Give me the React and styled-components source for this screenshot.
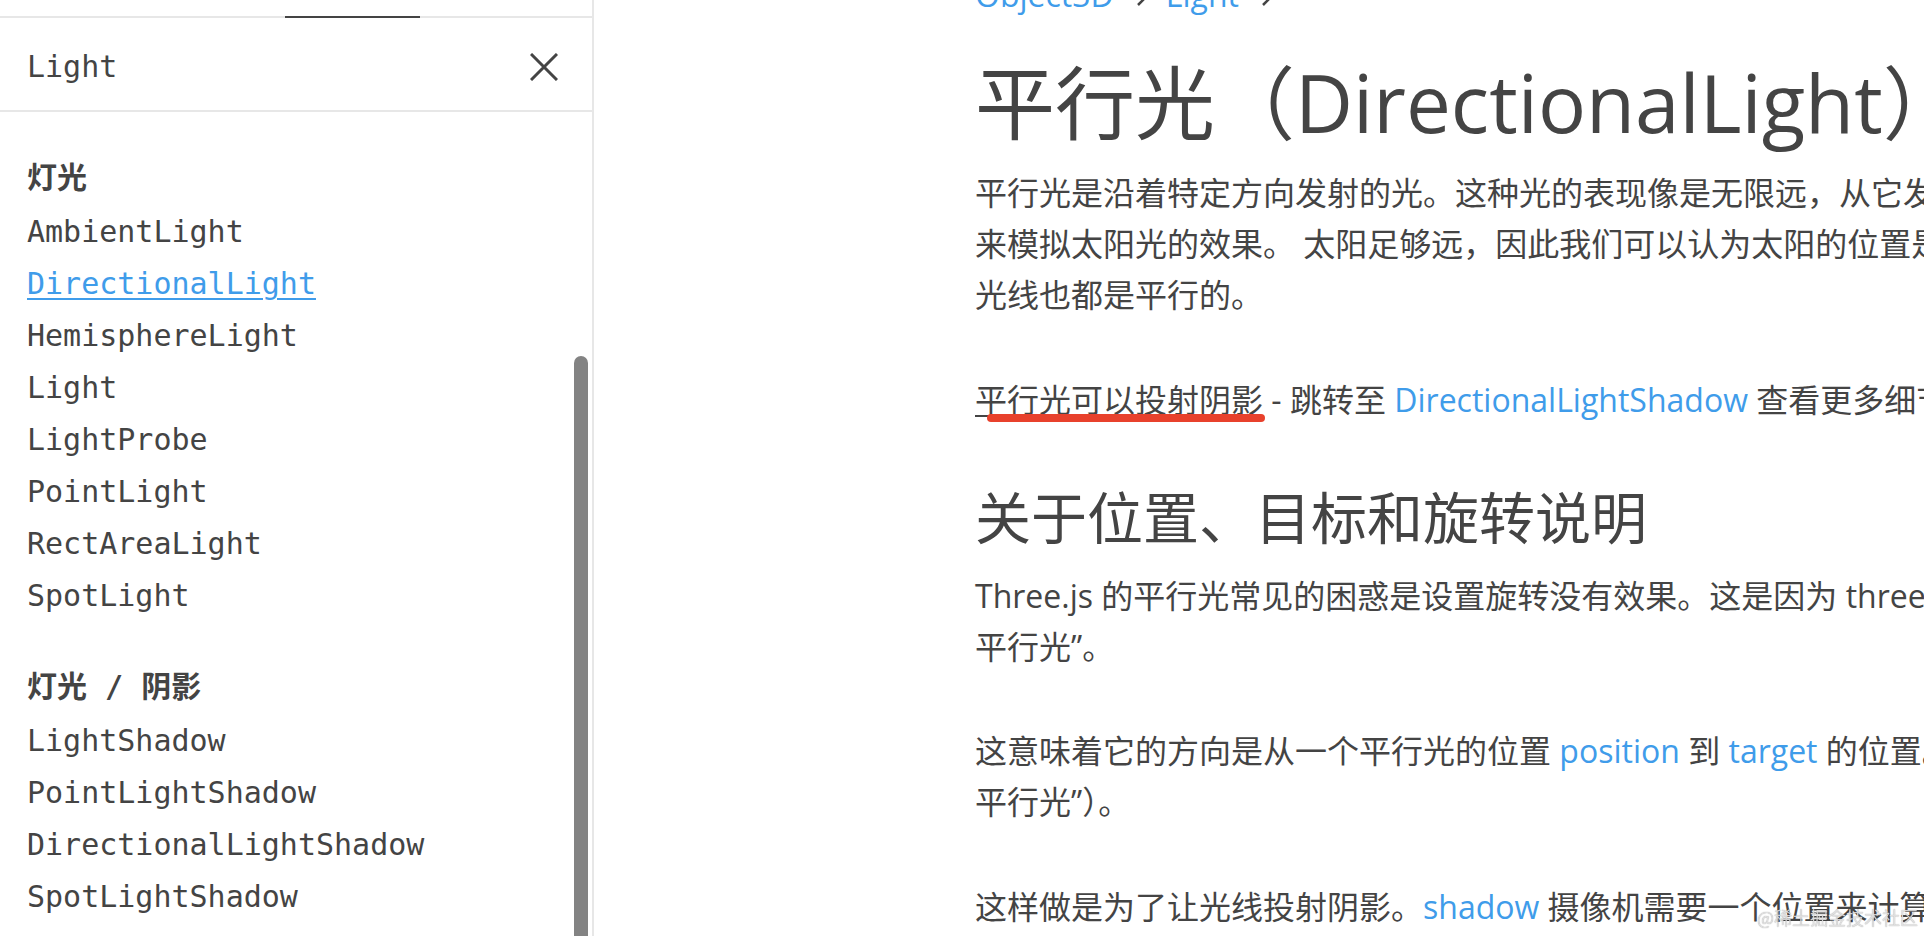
import styled, { createGlobalStyle } from 'styled-components';

const GlobalStyle = createGlobalStyle`
	html, body {
		margin: 0;
		padding: 0;
		height: 100%;
		overflow: hidden;
		background: #fff;
	}
	body {
		font-family: "Open Sans", "Noto Sans CJK SC", sans-serif;
		color: #444;
	}
`;

const Page = styled.div`
	display: flex;
	width: 100vw;
	height: 100vh;
	overflow: hidden;
`;

const Sidebar = styled.aside`
	position: relative;
	flex: 0 0 592px;
	display: flex;
	flex-direction: column;
	border-right: 2px solid #e7e7e7;
	overflow: hidden;
	font-family: "DejaVu Sans Mono", "Noto Sans CJK SC", monospace;
	color: #444;
`;

const TabLine = styled.div`
	display: flex;
	margin-top: 16px;
	padding-left: 285px;
	height: 2px;
	background: #e7e7e7;
`;

const TabActive = styled.div`
	width: 135px;
	height: 2px;
	background: #444;
`;

const Header = styled.div`
	display: flex;
	align-items: center;
	justify-content: space-between;
	box-sizing: border-box;
	height: 94px;
	padding: 5px 34px 0 27px;
	border-bottom: 2px solid #e7e7e7;
	font-size: 30px;
`;

const CloseButton = styled.button`
	display: flex;
	padding: 0;
	border: none;
	background: none;
	cursor: pointer;
`;

const Nav = styled.nav`
	padding: 40px 0 0 27px;
`;

const Section = styled.div`
	& + & {
		margin-top: 39px;
	}
`;

const SectionTitle = styled.h2`
	margin: 0 0 2px;
	font-size: 30px;
	line-height: 52px;
	font-weight: 700;
	white-space: pre;
`;

const NavItem = styled.a`
	display: block;
	font-size: 30px;
	line-height: 52px;
	color: ${(p) => (p.$active ? '#3f9cea' : '#444')};
	text-decoration: ${(p) => (p.$active ? 'underline' : 'none')};
	text-decoration-thickness: 2px;
	text-underline-offset: 4px;
`;

const ScrollThumb = styled.div`
	position: absolute;
	right: 4px;
	top: 356px;
	bottom: 0;
	width: 14px;
	border-radius: 7px 7px 0 0;
	background: #838383;
`;

const Main = styled.main`
	flex: 1;
	min-width: 0;
	padding-left: 381px;
	overflow: hidden;
	white-space: nowrap;
`;

const Breadcrumb = styled.div`
	display: flex;
	align-items: center;
	margin-top: -31px;
	height: 51px;
	font-size: 32px;
`;

const Chevron = styled.svg`
	margin: 0 17px 0 23px;
`;

const Link = styled.a`
	color: #3f9cea;
	text-decoration: none;
`;

const Title = styled.h1`
	margin: 34px 0 0;
	font-size: 80px;
	line-height: 96px;
	font-weight: 400;
`;

const SubTitle = styled.h2`
	margin: 59px 0 0;
	font-size: 56px;
	line-height: 67px;
	font-weight: 400;
`;

const Para = styled.p`
	margin: ${(p) => (p.$first ? '17px' : p.$afterHeading ? '19px' : '53px')} 0 0;
	font-size: 32px;
	line-height: 51.2px;
`;

const Marked = styled.span`
	position: relative;
	text-decoration: underline;
	text-decoration-thickness: 2px;
	text-underline-offset: 3px;

	&::after {
		content: '';
		position: absolute;
		left: 12px;
		right: -2px;
		top: 36px;
		height: 8px;
		border-radius: 4px;
		background: #e8412c;
	}
`;

const Watermark = styled.div`
	position: fixed;
	right: 6px;
	bottom: 6px;
	font-family: "Noto Sans CJK SC", sans-serif;
	font-size: 18px;
	color: rgba(235, 235, 235, 0.85);
	text-shadow: 0 0 1px rgba(0, 0, 0, 0.45);
`;

const lights = [
	'AmbientLight',
	'DirectionalLight',
	'HemisphereLight',
	'Light',
	'LightProbe',
	'PointLight',
	'RectAreaLight',
	'SpotLight',
];

const shadows = ['LightShadow', 'PointLightShadow', 'DirectionalLightShadow', 'SpotLightShadow'];

const ChevronIcon = () => (
	<Chevron width="12" height="22" viewBox="0 0 12 22">
		<polyline points="1,1 11,11 1,21" fill="none" stroke="#444" strokeWidth="2.5" />
	</Chevron>
);

const App = () => {
	return (
		<Page>
			<GlobalStyle />
			<Sidebar>
				<TabLine>
					<TabActive />
				</TabLine>
				<Header>
					<span>Light</span>
					<CloseButton aria-label="close">
						<svg width="28" height="28" viewBox="0 0 28 28">
							<path d="M1 1 27 27 M27 1 1 27" stroke="#444" strokeWidth="3" fill="none" />
						</svg>
					</CloseButton>
				</Header>
				<Nav>
					<Section>
						<SectionTitle>灯光</SectionTitle>
						{lights.map((name) => (
							<NavItem key={name} $active={name === 'DirectionalLight'}>
								{name}
							</NavItem>
						))}
					</Section>
					<Section>
						<SectionTitle>灯光 / 阴影</SectionTitle>
						{shadows.map((name) => (
							<NavItem key={name}>{name}</NavItem>
						))}
					</Section>
				</Nav>
				<ScrollThumb />
			</Sidebar>

			<Main>
				<Breadcrumb>
					<Link>Object3D</Link>
					<ChevronIcon />
					<Link>Light</Link>
					<ChevronIcon />
				</Breadcrumb>
				<Title>平行光（DirectionalLight）</Title>
				<Para $first>
					平行光是沿着特定方向发射的光。这种光的表现像是无限远，从它发出的光线都是平行的。常常用平行光
					<br />
					来模拟太阳光的效果。 太阳足够远，因此我们可以认为太阳的位置是无限远，所以我们认为从太阳发出的
					<br />
					光线也都是平行的。
				</Para>
				<Para>
					<Marked>平行光可以投射阴影</Marked> - 跳转至 <Link>DirectionalLightShadow</Link> 查看更多细节。
				</Para>
				<SubTitle>关于位置、目标和旋转说明</SubTitle>
				<Para $afterHeading>
					Three.js 的平行光常见的困惑是设置旋转没有效果。这是因为 three.js 的平行光类似与其他引擎的“目标
					<br />
					平行光”。
				</Para>
				<Para>
					这意味着它的方向是从一个平行光的位置 <Link>position</Link> 到 <Link>target</Link>{' '}
					的位置。（而不是一个只有旋转分量的“自由
					<br />
					平行光”）。
				</Para>
				<Para>
					这样做是为了让光线投射阴影。<Link>shadow</Link> 摄像机需要一个位置来计算阴影。
				</Para>
			</Main>
			<Watermark>@稀土掘金技术社区</Watermark>
		</Page>
	);
};

export default App;
